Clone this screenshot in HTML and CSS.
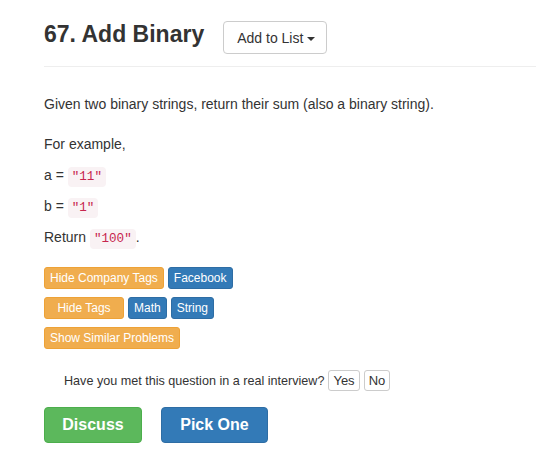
FILE: index.html
```html
<!DOCTYPE html>
<html>
<head>
<meta charset="utf-8">
<link rel="stylesheet" href="styles.css">
</head>
<body>
<div class="page">
  <div class="header">
    <h3 class="title">67. Add Binary</h3>
    <button class="btn-list">Add to List <span class="caret"></span></button>
  </div>
  <hr class="divider">
  <div class="question">
    <p class="lead-p">Given two binary strings, return their sum (also a binary string).</p>
    <p>For example,</p>
    <p>a = <code>"11"</code></p>
    <p>b = <code>"1"</code></p>
    <p>Return <code>"100"</code>.</p>
  </div>
  <div class="tags">
    <div class="tag-row"><span class="lbl orange">Hide Company Tags</span><span class="lbl blue">Facebook</span></div>
    <div class="tag-row"><span class="lbl orange wide">Hide Tags</span><span class="lbl blue">Math</span><span class="lbl blue">String</span></div>
    <div class="tag-row"><span class="lbl orange">Show Similar Problems</span></div>
  </div>
  <div class="interview">
    <span>Have you met this question in a real interview?</span>
    <button class="yn">Yes</button>
    <button class="yn">No</button>
  </div>
  <div class="actions">
    <button class="big green">Discuss</button>
    <button class="big blue-big">Pick One</button>
  </div>
</div>
</body>
</html>
```
FILE: styles.css
```css
html, body {
  margin: 0;
  padding: 0;
  background: #fff;
}
body {
  font-family: "Liberation Sans", Arial, sans-serif;
  font-size: 14px;
  line-height: 20px;
  color: #333;
}
.page {
  padding-left: 44px;
}
.header {
  display: flex;
  align-items: flex-start;
  gap: 19px;
  padding-top: 21px;
  height: 33px;
}
.title {
  margin: -3px 0 0 0;
  font-size: 23px;
  font-weight: bold;
  line-height: 33px;
  color: #333;
}
.btn-list {
  font-family: inherit;
  font-size: 14px;
  color: #333;
  background: #fff;
  border: 1px solid #ccc;
  border-radius: 4px;
  height: 33px;
  padding: 0 11px 0 13px;
  white-space: nowrap;
}
.caret {
  display: inline-block;
  width: 0;
  height: 0;
  border-top: 4px solid #333;
  border-left: 4px solid transparent;
  border-right: 4px solid transparent;
  vertical-align: middle;
  margin-left: 0;
}
.divider {
  border: 0;
  border-top: 1px solid #eee;
  margin: 12px 0 0 0;
}
.question {
  padding-top: 27px;
}
.question p {
  margin: 0 0 11px 0;
}
.question .lead-p {
  margin-bottom: 20px;
}
code {
  font-family: "Liberation Mono", monospace;
  font-size: 12.6px;
  line-height: 1;
  color: #c7254e;
  background: #f9f2f4;
  border-radius: 4px;
  padding: 3px 4px;
}
.tags {
  margin-top: 20px;
  display: flex;
  flex-direction: column;
  gap: 8px;
}
.tag-row {
  display: flex;
  gap: 4px;
}
.lbl {
  display: inline-block;
  font-size: 12px;
  line-height: 18px;
  padding: 1px 5px;
  border: 1px solid transparent;
  border-radius: 3px;
  color: #fff;
  text-align: center;
}
.orange {
  background: #f0ad4e;
  border-color: #eea236;
}
.blue {
  background: #337ab7;
  border-color: #2e6da4;
}
.wide {
  width: 68px;
}
.interview {
  margin-top: 21px;
  padding-left: 20px;
  display: flex;
  align-items: center;
  gap: 4px;
  font-size: 12.6px;
}
.yn {
  font-family: inherit;
  font-size: 13px;
  color: #333;
  background: #fff;
  border: 1px solid #ccc;
  border-radius: 3px;
  height: 21px;
  padding: 0 4px;
  line-height: 19px;
}
.actions {
  margin-top: 16px;
  display: flex;
  gap: 19px;
}
.big {
  font-family: inherit;
  font-size: 16px;
  font-weight: bold;
  color: #fff;
  border: 1px solid transparent;
  border-radius: 4px;
  height: 36px;
  padding: 0;
}
.green {
  background: #5cb85c;
  border-color: #4cae4c;
  width: 98px;
}
.blue-big {
  background: #337ab7;
  border-color: #2e6da4;
  width: 107px;
}
```
